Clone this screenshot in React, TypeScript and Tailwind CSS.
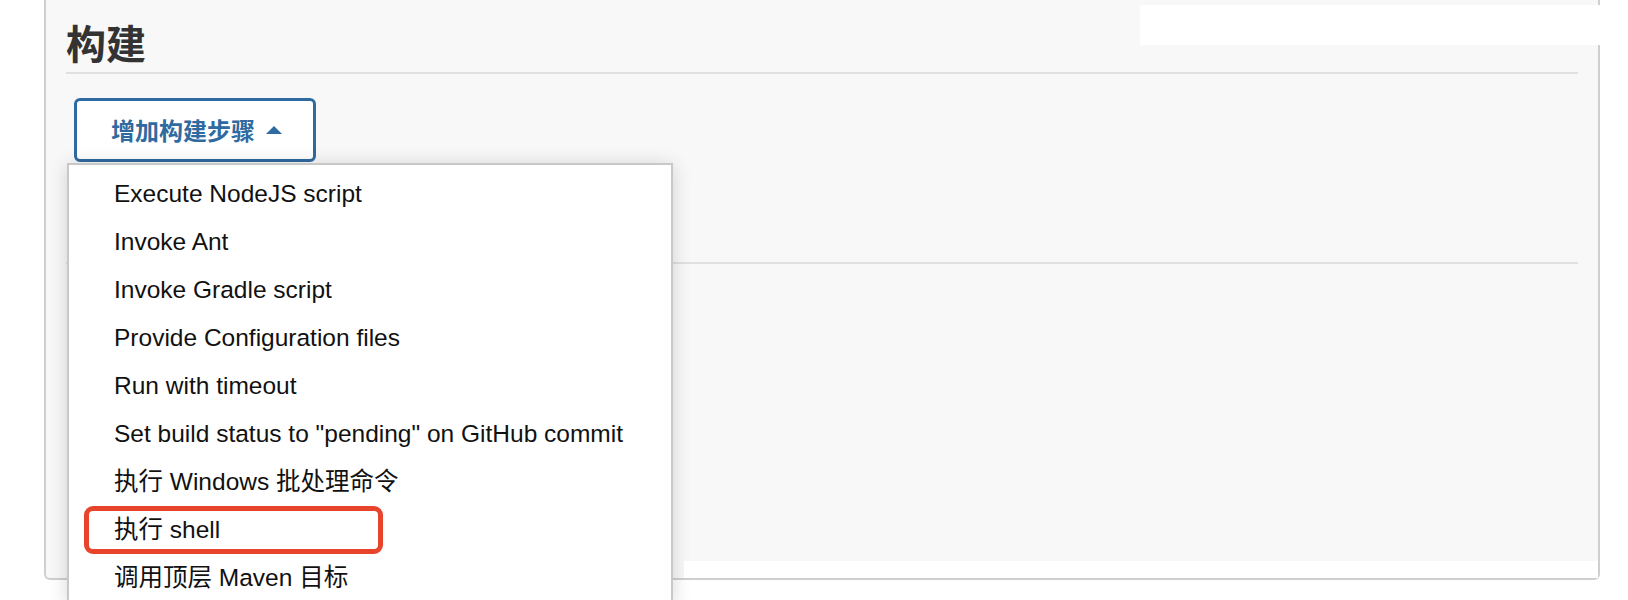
const steps = [
  'Execute NodeJS script',
  'Invoke Ant',
  'Invoke Gradle script',
  'Provide Configuration files',
  'Run with timeout',
  'Set build status to "pending" on GitHub commit',
  '执行 Windows 批处理命令',
  '执行 shell',
  '调用顶层 Maven 目标',
];

const cjk = "font-['Liberation_Sans','Noto_Sans_CJK_SC',sans-serif]";

export default function App() {
  return (
    <div className={`relative flex h-[600px] w-[1628px] overflow-hidden bg-white ${cjk}`}>
      {/* left gutter */}
      <div className="w-[44px] shrink-0" />

      {/* build section panel */}
      <div className="relative h-[580px] w-[1556px] shrink-0 rounded-b-[6px] border-x-2 border-b-2 border-[#cfcfcf] bg-[#f8f8f8] px-[20px]">
        <h2 className="border-b-2 border-[#e0e0e0] pt-[20px] pb-[8px] text-[40px] leading-[44px] font-bold text-[#333] font-['Noto_Sans_CJK_SC',sans-serif]">
          构建
        </h2>

        <button className="mt-[24px] ml-[8px] flex h-[64px] w-[242px] items-center gap-[11px] rounded-[6px] border-[3px] border-[#2f6aa0] bg-white pl-[34px] text-[24px] font-bold text-[#2f6aa0] font-['Noto_Sans_CJK_SC',sans-serif]">
          增加构建步骤
          <svg width="16" height="8" viewBox="0 0 16 8">
            <polygon points="0,8 8,0 16,8" fill="#2f6aa0" />
          </svg>
        </button>

        <div className="mt-[100px] h-[2px] bg-[#e0e0e0]" />

        {/* dropdown menu */}
        <div className="absolute top-[163px] left-[21px] w-[606px] border-2 border-[#c8c8c8] bg-white pt-[5px] shadow-[0_2px_18px_rgba(0,0,0,0.16)]">
          {steps.map(step => (
            <div key={step} className="relative h-[48px] pl-[45px] text-[24.5px] leading-[48px] text-[#111]">
              {step === '执行 shell' && (
                <div className="absolute inset-y-0 left-[15px] w-[299px] rounded-[9px] border-[5px] border-[#e8432b]" />
              )}
              <span className="relative">{step}</span>
            </div>
          ))}
        </div>
      </div>

      {/* screenshot cover patches */}
      <div className="absolute top-[5px] left-[1140px] h-[40px] w-[460px] bg-white" />
      <div className="absolute top-[561px] left-[684px] h-[17px] w-[914px] bg-white" />
    </div>
  );
}
